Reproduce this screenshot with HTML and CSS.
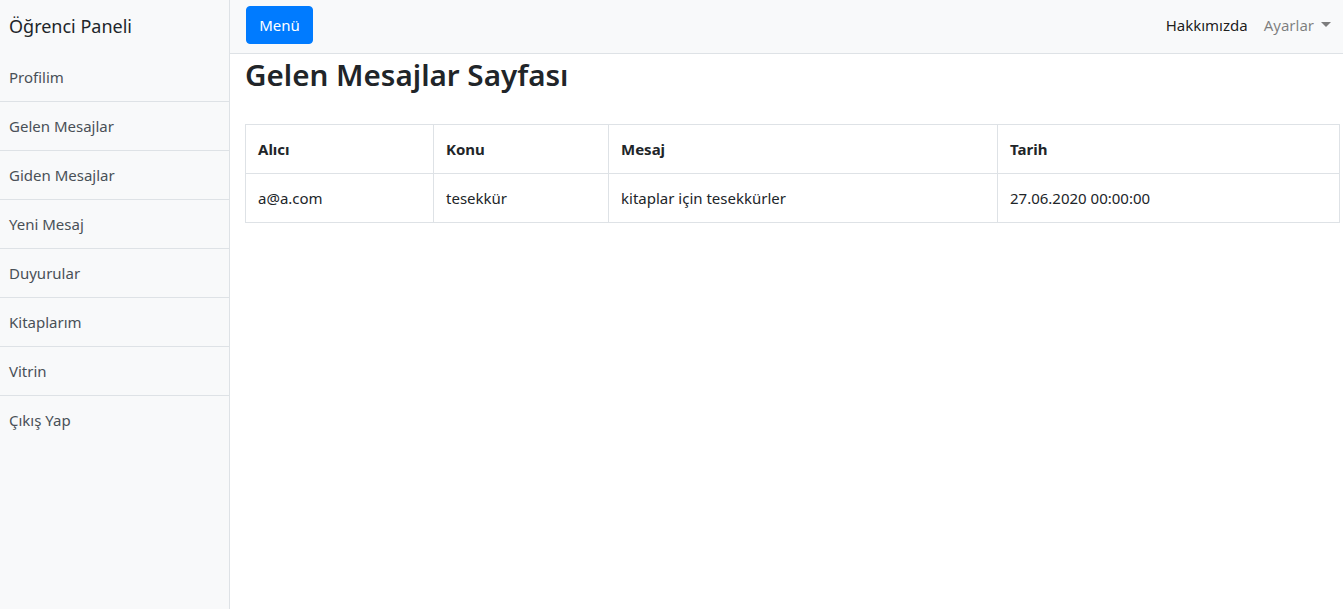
FILE: index.html
```html
<!DOCTYPE html>
<html lang="tr">
<head>
<meta charset="utf-8">
<title>Öğrenci Paneli</title>
<link rel="stylesheet" href="styles.css">
</head>
<body>
<div class="wrapper">
  <aside class="sidebar">
    <div class="sidebar-heading">Öğrenci Paneli</div>
    <nav class="list-group">
      <a class="list-item" href="#">Profilim</a>
      <a class="list-item" href="#">Gelen Mesajlar</a>
      <a class="list-item" href="#">Giden Mesajlar</a>
      <a class="list-item" href="#">Yeni Mesaj</a>
      <a class="list-item" href="#">Duyurular</a>
      <a class="list-item" href="#">Kitaplarım</a>
      <a class="list-item" href="#">Vitrin</a>
      <a class="list-item" href="#">Çıkış Yap</a>
    </nav>
  </aside>
  <div class="page">
    <header class="navbar">
      <button class="btn-menu" type="button">Menü</button>
      <div class="nav-right">
        <a class="nav-link active" href="#">Hakkımızda</a>
        <a class="nav-link muted" href="#">Ayarlar <span class="caret"></span></a>
      </div>
    </header>
    <main class="content">
      <h1 class="title">Gelen Mesajlar Sayfası</h1>
      <table class="table">
        <thead>
          <tr><th class="c1">Alıcı</th><th class="c2">Konu</th><th class="c3">Mesaj</th><th class="c4">Tarih</th></tr>
        </thead>
        <tbody>
          <tr><td>a@a.com</td><td>tesekkür</td><td>kitaplar için tesekkürler</td><td>27.06.2020 00:00:00</td></tr>
        </tbody>
      </table>
    </main>
  </div>
</div>
</body>
</html>
```
FILE: styles.css
```css
* { box-sizing: border-box; }
html, body { margin: 0; height: 100%; }
body {
  font-family: "Noto Sans", "Open Sans", sans-serif;
  font-size: 15px;
  color: #212529;
  background: #fff;
}
.wrapper { display: flex; height: 609px; }
.sidebar {
  width: 230px;
  flex: 0 0 230px;
  background: #f8f9fa;
  border-right: 1px solid #dee2e6;
}
.sidebar-heading {
  height: 53px;
  padding-left: 9px;
  padding-bottom: 2px;
  display: flex;
  align-items: center;
  font-size: 18px;
  color: #212529;
}
.list-group { display: flex; flex-direction: column; }
.list-item {
  display: flex;
  align-items: center;
  height: 49px;
  padding-left: 9px;
  color: #495057;
  text-decoration: none;
  border-top: 1px solid #dee2e6;
  font-size: 15px;
}
.list-item:first-child { border-top: 0; height: 48px; }
.page { flex: 1; display: flex; flex-direction: column; min-width: 0; }
.navbar {
  height: 54px;
  background: #f8f9fa;
  border-bottom: 1px solid #dee2e6;
  display: flex;
  align-items: center;
  justify-content: space-between;
  padding: 0 12px 0 16px;
}
.btn-menu {
  font-family: inherit;
  font-size: 15px;
  color: #fff;
  background: #007bff;
  border: 1px solid #007bff;
  border-radius: 4px;
  height: 38px;
  width: 67px;
  padding: 0;
  margin-top: -4px;
}
.nav-right { display: flex; align-items: center; gap: 16px; margin-top: -4px; }
.nav-link { text-decoration: none; font-size: 15px; }
.nav-link.active { color: rgba(0,0,0,.9); }
.nav-link.muted { color: rgba(0,0,0,.5); display: flex; align-items: center; }
.caret {
  display: inline-block;
  margin-left: 7px;
  border-top: 5px solid rgba(0,0,0,.5);
  border-left: 5px solid transparent;
  border-right: 5px solid transparent;
}
.content { padding: 0 3px 0 15px; }
.title {
  margin: 2px 0 30px;
  font-size: 29.6px;
  font-weight: 600;
  line-height: 38px;
  color: #212529;
}
.table {
  width: 100%;
  border-collapse: collapse;
  font-size: 15px;
}
.table th, .table td {
  border: 1px solid #dee2e6;
  padding: 0 12px;
  height: 49px;
  text-align: left;
  vertical-align: middle;
}
.table th { font-weight: 700; color: #212529; }
.table td { color: #212529; }
.c1 { width: 188px; }
.c2 { width: 175px; }
.c3 { width: 389px; }
```
